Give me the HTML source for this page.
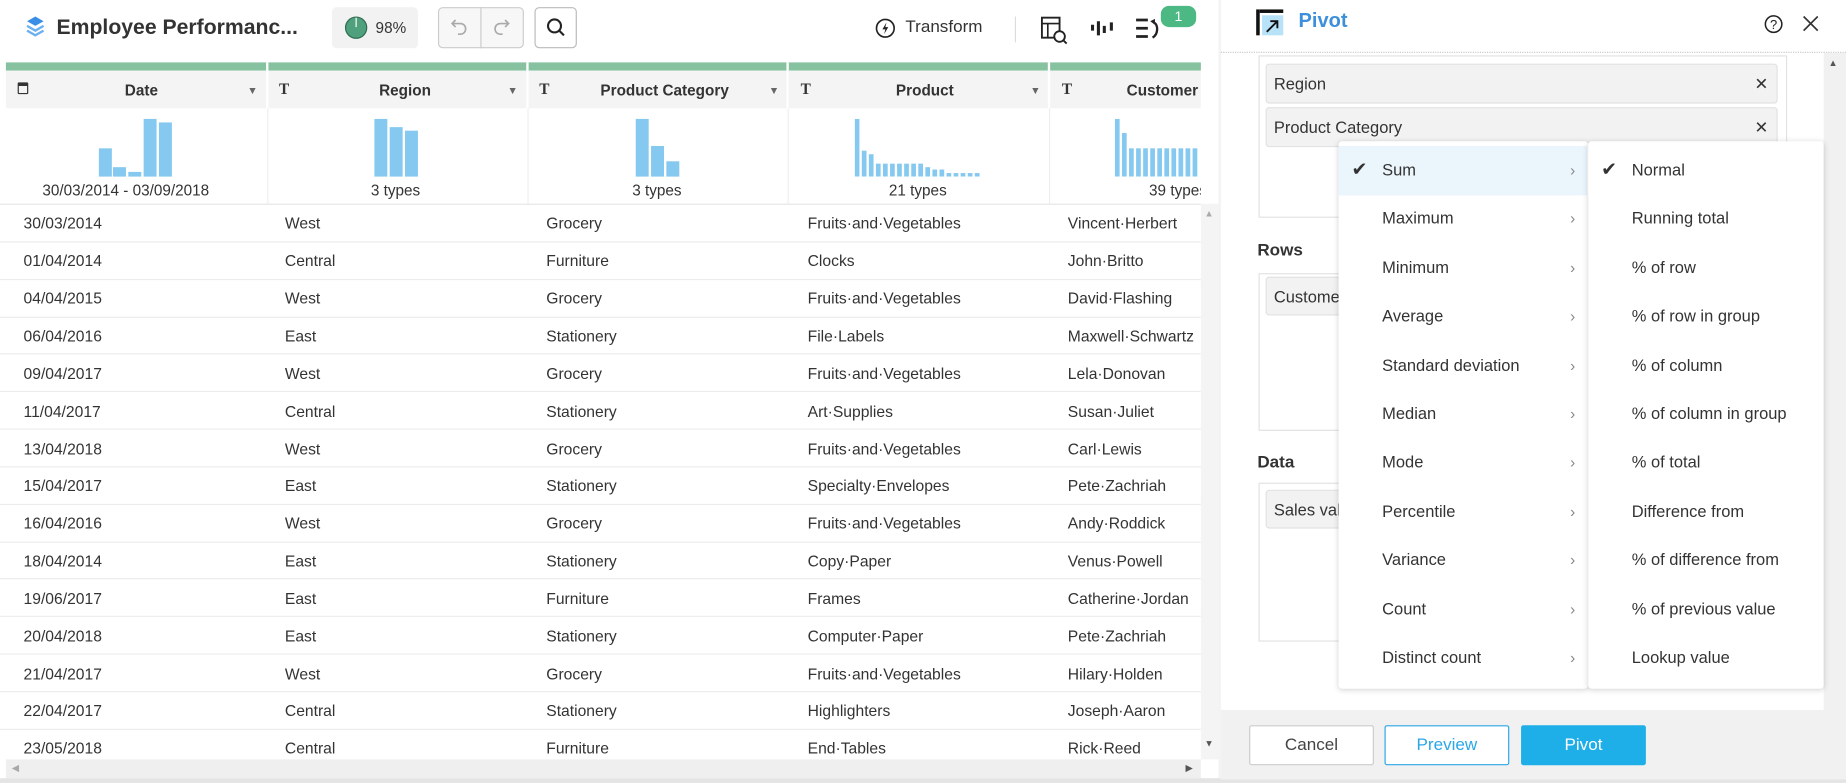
<!DOCTYPE html>
<html><head><meta charset="utf-8"><style>
*{box-sizing:border-box;margin:0;padding:0}
html,body{width:1846px;height:782px;overflow:hidden;background:#fff;font-family:"Liberation Sans",sans-serif;color:#333}
#s{position:absolute;left:0;top:0;width:1568px;height:665px;transform:scale(1.17730);transform-origin:0 0}
.a{position:absolute}
.t{position:absolute;font-size:13.3px;white-space:nowrap;color:#333}
.bar{position:absolute;background:#85c9f0;width:11px}
.hl{position:absolute;left:0;width:1020px;height:1px;background:#ececec}
.mi{position:absolute;left:0;width:211px;height:41.4px;font-size:14px;line-height:41.4px;padding-left:37px;color:#333}
.mi .ch{position:absolute;right:10px;top:0;color:#888;font-size:13px}
.ni{position:absolute;left:0;width:200px;height:41.4px;font-size:14px;line-height:41.4px;padding-left:37px;color:#333}
.chip{position:absolute;background:#f2f2f2;border:1px solid #e2e2e2;border-radius:3px;font-size:14px;padding-left:6px;color:#333}
.btn{position:absolute;top:616px;height:34px;width:106px;font-size:14.5px;text-align:center;line-height:32px;border-radius:2px}
.h{font-weight:bold;font-size:13px;top:69px}
</style></head><body><div id="s">
<svg class="a" style="left:22px;top:13px" width="16" height="20" viewBox="0 0 16 20"><path d="M8 1L15 5L8 9L1 5Z" fill="#3a8ee6"/><path d="M1 9L8 13L15 9M1 13L8 17L15 13" fill="none" stroke="#6cb0f0" stroke-width="2"/></svg>
<div class="t" style="left:48px;top:13px;font-size:18px;font-weight:bold;color:#333">Employee Performanc...</div>
<div class="a" style="left:282px;top:6px;width:73px;height:35px;background:#f2f2f2;border-radius:4px"></div>
<div class="a" style="left:293px;top:14px;width:19px;height:19px;border-radius:50%;background:#4fa07d;border:1px solid #2e6b52"></div>
<div class="a" style="left:302px;top:15px;width:1px;height:8px;background:#fff"></div>
<div class="t" style="left:319px;top:16px;font-size:13px">98%</div>
<div class="a" style="left:372px;top:6px;width:73px;height:35px;border:1px solid #ccc;border-radius:4px;background:#f7f7f7"></div>
<div class="a" style="left:408px;top:6px;width:1px;height:35px;background:#ccc"></div>
<svg class="a" style="left:382px;top:14px" width="16" height="18"><path d="M5 3L2 6L5 9M2 6H9C15 6 15 15 9 15H7" fill="none" stroke="#aaa" stroke-width="1.4"/></svg>
<svg class="a" style="left:418px;top:14px" width="16" height="18"><path d="M11 3L14 6L11 9M14 6H7C1 6 1 15 7 15H9" fill="none" stroke="#aaa" stroke-width="1.4"/></svg>
<div class="a" style="left:454px;top:6px;width:36px;height:35px;border:1px solid #bbb;border-radius:4px"></div>
<svg class="a" style="left:463px;top:14px" width="18" height="18"><circle cx="8" cy="8" r="5.5" fill="none" stroke="#222" stroke-width="1.8"/><path d="M12 12L16 16" stroke="#222" stroke-width="1.8"/></svg>
<svg class="a" style="left:743px;top:15px" width="18" height="18"><circle cx="9" cy="9" r="7.5" fill="none" stroke="#222" stroke-width="1.4"/><path d="M10 4L6.5 10H9L8 14L11.5 8H9Z" fill="#222"/></svg>
<div class="t" style="left:769px;top:15px;font-size:14.5px">Transform</div>
<div class="a" style="left:862px;top:14px;width:1px;height:22px;background:#ddd"></div>
<svg class="a" style="left:884px;top:13px" width="26" height="26"><rect x="1" y="2" width="15" height="17" fill="none" stroke="#222" stroke-width="1.6"/><path d="M1 7H16M6 7V19" stroke="#222" stroke-width="1.4"/><circle cx="16" cy="18" r="4.5" fill="#fff" stroke="#222" stroke-width="1.6"/><path d="M19 21L22 24" stroke="#222" stroke-width="1.6"/></svg>
<svg class="a" style="left:926px;top:16px" width="22" height="16"><path d="M2 5V10M7 2V14M12 6V12M18 3V10" stroke="#222" stroke-width="2.6"/></svg>
<svg class="a" style="left:964px;top:14px" width="24" height="22"><path d="M1 3H11M1 10H11M1 17H11" stroke="#222" stroke-width="2.4"/><path d="M15 18C20 15 20 7 16 5" fill="none" stroke="#222" stroke-width="2"/><path d="M13 4L17 2L17 7Z" fill="#222"/></svg>
<div class="a" style="left:986px;top:5px;width:30px;height:18px;background:#4cb883;border-radius:7px;color:#fff;font-size:12px;text-align:center;line-height:18px">1</div>
<div class="a" style="left:5px;top:53px;width:1015px;height:7px;background:#86c29f"></div>
<div class="a" style="left:5px;top:60px;width:1015px;height:32px;background:#f4f4f4"></div>
<div class="a" style="left:226px;top:53px;width:2px;height:120px;background:#fff"></div>
<div class="a" style="left:447px;top:53px;width:2px;height:120px;background:#fff"></div>
<div class="a" style="left:668px;top:53px;width:2px;height:120px;background:#fff"></div>
<div class="a" style="left:890px;top:53px;width:2px;height:120px;background:#fff"></div>
<div class="a" style="left:227px;top:92px;width:1px;height:81px;background:#eee"></div>
<div class="a" style="left:448px;top:92px;width:1px;height:81px;background:#eee"></div>
<div class="a" style="left:669px;top:92px;width:1px;height:81px;background:#eee"></div>
<div class="a" style="left:891px;top:92px;width:1px;height:81px;background:#eee"></div>
<div class="a" style="left:15px;top:70px;width:9px;height:10px;border:1.5px solid #333;border-top-width:3px;border-radius:1px"></div>
<div class="t h" style="left:106px">Date</div>
<div class="t" style="left:210px;top:72px;font-size:9px;color:#666">▼</div>
<div class="t" style="left:237px;top:68px;font-size:13px;font-weight:bold;font-family:'Liberation Serif',serif">T</div>
<div class="t h" style="left:322px">Region</div>
<div class="t" style="left:431px;top:72px;font-size:9px;color:#666">▼</div>
<div class="t" style="left:458px;top:68px;font-size:13px;font-weight:bold;font-family:'Liberation Serif',serif">T</div>
<div class="t h" style="left:510px">Product Category</div>
<div class="t" style="left:653px;top:72px;font-size:9px;color:#666">▼</div>
<div class="t" style="left:680px;top:68px;font-size:13px;font-weight:bold;font-family:'Liberation Serif',serif">T</div>
<div class="t h" style="left:761px">Product</div>
<div class="t" style="left:875px;top:72px;font-size:9px;color:#666">▼</div>
<div class="t" style="left:902px;top:68px;font-size:13px;font-weight:bold;font-family:'Liberation Serif',serif">T</div>
<div class="a" style="left:957px;top:60px;width:63px;height:32px;overflow:hidden"><div class="t h" style="left:0;top:9px">Customer</div></div>
<div class="bar" style="left:84px;top:126px;height:24px"></div>
<div class="bar" style="left:96px;top:142px;height:8px"></div>
<div class="bar" style="left:109px;top:146px;height:4px"></div>
<div class="bar" style="left:122px;top:101px;height:49px"></div>
<div class="bar" style="left:135px;top:104px;height:46px"></div>
<div class="bar" style="left:318px;top:101px;height:49px"></div>
<div class="bar" style="left:331px;top:108px;height:42px"></div>
<div class="bar" style="left:344px;top:111px;height:39px"></div>
<div class="bar" style="left:540px;top:101px;height:49px"></div>
<div class="bar" style="left:553px;top:124px;height:26px"></div>
<div class="bar" style="left:566px;top:137px;height:13px"></div>
<div class="a" style="left:726px;top:101px;width:110px;height:49px">
<svg width="110" height="49"><g fill="#85c9f0"><rect x="0" y="0" width="4" height="49"/><rect x="6" y="27" width="4" height="22"/><rect x="12" y="30" width="4" height="19"/><rect x="18" y="38" width="4" height="11"/><rect x="24" y="38" width="4" height="11"/><rect x="30" y="38" width="4" height="11"/><rect x="36" y="38" width="4" height="11"/><rect x="42" y="38" width="4" height="11"/><rect x="48" y="38" width="4" height="11"/><rect x="54" y="38" width="4" height="11"/><rect x="60" y="41" width="4" height="8"/><rect x="66" y="43" width="4" height="6"/><rect x="72" y="43" width="4" height="6"/><rect x="78" y="46" width="4" height="3"/><rect x="84" y="46" width="4" height="3"/><rect x="90" y="46" width="4" height="3"/><rect x="96" y="46" width="4" height="3"/><rect x="102" y="46" width="4" height="3"/></g></svg></div>
<div class="a" style="left:947px;top:101px;width:73px;height:49px">
<svg width="73" height="49"><g fill="#85c9f0"><rect x="0" y="0" width="4" height="49"/><rect x="6" y="12" width="4" height="37"/><rect x="12" y="25" width="4" height="24"/><rect x="18" y="25" width="4" height="24"/><rect x="24" y="25" width="4" height="24"/><rect x="30" y="25" width="4" height="24"/><rect x="36" y="25" width="4" height="24"/><rect x="42" y="25" width="4" height="24"/><rect x="48" y="25" width="4" height="24"/><rect x="54" y="25" width="4" height="24"/><rect x="60" y="25" width="4" height="24"/><rect x="66" y="25" width="4" height="24"/></g></svg></div>
<div class="t" style="left:36px;top:154px;font-size:13px">30/03/2014 - 03/09/2018</div>
<div class="t" style="left:315px;top:154px;font-size:13px">3 types</div>
<div class="t" style="left:537px;top:154px;font-size:13px">3 types</div>
<div class="t" style="left:755px;top:154px;font-size:13px">21 types</div>
<div class="a" style="left:976px;top:150px;width:44px;height:22px;overflow:hidden"><div class="t" style="left:0;top:4px;font-size:13px">39 types</div></div>
<div class="hl" style="top:173px;background:#e6e6e6"></div>
<div class="a" style="left:1020px;top:173px;width:15px;height:472px;background:#f4f4f4"></div>
<div class="t" style="left:1023px;top:177px;font-size:8px;color:#aaa">▲</div>
<div class="t" style="left:1023px;top:627px;font-size:8px;color:#555">▼</div>
<div class="a" style="left:1035px;top:0;width:2px;height:665px;background:#f3f3f3"></div>
<div class="a" style="left:5px;top:645px;width:1015px;height:16px;background:#efefef"></div>
<div class="t" style="left:10px;top:648px;font-size:8px;color:#aaa">◀</div>
<div class="t" style="left:1007px;top:648px;font-size:8px;color:#555">▶</div>
<div class="a" style="left:0;top:661px;width:1037px;height:4px;background:#e4e4e4"></div>
<div class="a" style="left:1037px;top:44px;width:531px;height:0;border-top:1px dotted #ccc"></div>
<div class="a" style="left:1067px;top:8px;width:3px;height:22px;background:#111"></div>
<div class="a" style="left:1070px;top:8px;width:20px;height:3px;background:#111"></div>
<div class="a" style="left:1072px;top:13px;width:18px;height:17px;background:#b8e2f8"></div>
<svg class="a" style="left:1074px;top:15px" width="14" height="14"><path d="M2 12L11 3M5 3H11V9" fill="none" stroke="#111" stroke-width="1.6"/></svg>
<div class="t" style="left:1103px;top:8px;font-size:17px;font-weight:bold;color:#3d8fdc">Pivot</div>
<svg class="a" style="left:1498px;top:12px" width="17" height="17"><circle cx="8.5" cy="8.5" r="7" fill="none" stroke="#222" stroke-width="1.3"/><text x="8.5" y="12.5" font-size="11" text-anchor="middle" font-family="Liberation Sans" fill="#222">?</text></svg>
<svg class="a" style="left:1530px;top:12px" width="16" height="16"><path d="M2 2L14 14M14 2L2 14" stroke="#333" stroke-width="1.4"/></svg>
<div class="a" style="left:1549px;top:45px;width:19px;height:558px;background:#f1f1f1"></div>
<div class="t" style="left:1553px;top:49px;font-size:8px;color:#555">▲</div>
<div class="a" style="left:1069px;top:47px;width:449px;height:138px;border:1px solid #e2e2e2"></div>
<div class="chip" style="left:1075px;top:54px;width:435px;height:34px;line-height:33px">Region<span style="position:absolute;right:7px;top:0">✕</span></div>
<div class="chip" style="left:1075px;top:91px;width:435px;height:34px;line-height:33px">Product Category<span style="position:absolute;right:7px;top:0">✕</span></div>
<div class="t" style="left:1068px;top:205px;font-size:14.5px;font-weight:bold">Rows</div>
<div class="a" style="left:1069px;top:232px;width:449px;height:134px;border:1px solid #e2e2e2"></div>
<div class="chip" style="left:1075px;top:235px;width:100px;height:33px;line-height:32px">Customer</div>
<div class="t" style="left:1068px;top:385px;font-size:14.5px;font-weight:bold">Data</div>
<div class="a" style="left:1069px;top:410px;width:449px;height:135px;border:1px solid #e2e2e2"></div>
<div class="chip" style="left:1075px;top:416px;width:100px;height:33px;line-height:32px">Sales value</div>
<div class="a" style="left:1037px;top:603px;width:531px;height:59px;background:#f1f1f1"></div>
<div class="a" style="left:1037px;top:662px;width:531px;height:3px;background:#e4e4e4"></div>
<div class="btn" style="left:1061px;background:#fff;border:1px solid #ccc;color:#444">Cancel</div>
<div class="btn" style="left:1176px;background:#fff;border:1px solid #2aa8e6;color:#2aa8e6">Preview</div>
<div class="btn" style="left:1292px;background:#1eaee8;color:#fff;border:1px solid #1eaee8">Pivot</div>
<div class="a" style="left:1137px;top:120px;width:212px;height:465px;background:#fff;box-shadow:0 1px 5px rgba(0,0,0,.18);border-radius:3px">
<div class="a" style="left:0;top:4px;width:211px;height:42px;background:#ebf5fc"></div>
<div class="mi" style="top:4px"><span style="position:absolute;left:11px;font-size:16px">✔</span>Sum<span class="ch">›</span></div>
<div class="mi" style="top:45.4px">Maximum<span class="ch">›</span></div>
<div class="mi" style="top:86.8px">Minimum<span class="ch">›</span></div>
<div class="mi" style="top:128.2px">Average<span class="ch">›</span></div>
<div class="mi" style="top:169.6px">Standard deviation<span class="ch">›</span></div>
<div class="mi" style="top:211px">Median<span class="ch">›</span></div>
<div class="mi" style="top:252.4px">Mode<span class="ch">›</span></div>
<div class="mi" style="top:293.8px">Percentile<span class="ch">›</span></div>
<div class="mi" style="top:335.2px">Variance<span class="ch">›</span></div>
<div class="mi" style="top:376.6px">Count<span class="ch">›</span></div>
<div class="mi" style="top:418px">Distinct count<span class="ch">›</span></div>
</div>
<div class="a" style="left:1349px;top:120px;width:200px;height:465px;background:#fff;box-shadow:0 1px 5px rgba(0,0,0,.18);border-radius:3px">
<div class="ni" style="top:4px"><span style="position:absolute;left:11px;font-size:16px">✔</span>Normal</div>
<div class="ni" style="top:45.4px">Running total</div>
<div class="ni" style="top:86.8px">% of row</div>
<div class="ni" style="top:128.2px">% of row in group</div>
<div class="ni" style="top:169.6px">% of column</div>
<div class="ni" style="top:211px">% of column in group</div>
<div class="ni" style="top:252.4px">% of total</div>
<div class="ni" style="top:293.8px">Difference from</div>
<div class="ni" style="top:335.2px">% of difference from</div>
<div class="ni" style="top:376.6px">% of previous value</div>
<div class="ni" style="top:418px">Lookup value</div>
</div>
<div class="a" style="left:0;top:173px;width:1020px;height:472px;overflow:hidden;z-index:-1">
<div style="position:absolute;left:0;top:0;width:1020px">
<div class="t" style="left:20px;top:9px">30/03/2014</div><div class="t" style="left:242px;top:9px">West</div><div class="t" style="left:464px;top:9px">Grocery</div><div class="t" style="left:686px;top:9px">Fruits·and·Vegetables</div><div class="t" style="left:907px;top:9px">Vincent·Herbert</div>
<div class="hl" style="top:31.8px"></div>
<div class="t" style="left:20px;top:41px">01/04/2014</div><div class="t" style="left:242px;top:41px">Central</div><div class="t" style="left:464px;top:41px">Furniture</div><div class="t" style="left:686px;top:41px">Clocks</div><div class="t" style="left:907px;top:41px">John·Britto</div>
<div class="hl" style="top:63.7px"></div>
<div class="t" style="left:20px;top:73px">04/04/2015</div><div class="t" style="left:242px;top:73px">West</div><div class="t" style="left:464px;top:73px">Grocery</div><div class="t" style="left:686px;top:73px">Fruits·and·Vegetables</div><div class="t" style="left:907px;top:73px">David·Flashing</div>
<div class="hl" style="top:95.5px"></div>
<div class="t" style="left:20px;top:105px">06/04/2016</div><div class="t" style="left:242px;top:105px">East</div><div class="t" style="left:464px;top:105px">Stationery</div><div class="t" style="left:686px;top:105px">File·Labels</div><div class="t" style="left:907px;top:105px">Maxwell·Schwartz</div>
<div class="hl" style="top:127.4px"></div>
<div class="t" style="left:20px;top:137px">09/04/2017</div><div class="t" style="left:242px;top:137px">West</div><div class="t" style="left:464px;top:137px">Grocery</div><div class="t" style="left:686px;top:137px">Fruits·and·Vegetables</div><div class="t" style="left:907px;top:137px">Lela·Donovan</div>
<div class="hl" style="top:159.2px"></div>
<div class="t" style="left:20px;top:169px">11/04/2017</div><div class="t" style="left:242px;top:169px">Central</div><div class="t" style="left:464px;top:169px">Stationery</div><div class="t" style="left:686px;top:169px">Art·Supplies</div><div class="t" style="left:907px;top:169px">Susan·Juliet</div>
<div class="hl" style="top:191px"></div>
<div class="t" style="left:20px;top:201px">13/04/2018</div><div class="t" style="left:242px;top:201px">West</div><div class="t" style="left:464px;top:201px">Grocery</div><div class="t" style="left:686px;top:201px">Fruits·and·Vegetables</div><div class="t" style="left:907px;top:201px">Carl·Lewis</div>
<div class="hl" style="top:222.9px"></div>
<div class="t" style="left:20px;top:232px">15/04/2017</div><div class="t" style="left:242px;top:232px">East</div><div class="t" style="left:464px;top:232px">Stationery</div><div class="t" style="left:686px;top:232px">Specialty·Envelopes</div><div class="t" style="left:907px;top:232px">Pete·Zachriah</div>
<div class="hl" style="top:254.7px"></div>
<div class="t" style="left:20px;top:264px">16/04/2016</div><div class="t" style="left:242px;top:264px">West</div><div class="t" style="left:464px;top:264px">Grocery</div><div class="t" style="left:686px;top:264px">Fruits·and·Vegetables</div><div class="t" style="left:907px;top:264px">Andy·Roddick</div>
<div class="hl" style="top:286.6px"></div>
<div class="t" style="left:20px;top:296px">18/04/2014</div><div class="t" style="left:242px;top:296px">East</div><div class="t" style="left:464px;top:296px">Stationery</div><div class="t" style="left:686px;top:296px">Copy·Paper</div><div class="t" style="left:907px;top:296px">Venus·Powell</div>
<div class="hl" style="top:318.4px"></div>
<div class="t" style="left:20px;top:328px">19/06/2017</div><div class="t" style="left:242px;top:328px">East</div><div class="t" style="left:464px;top:328px">Furniture</div><div class="t" style="left:686px;top:328px">Frames</div><div class="t" style="left:907px;top:328px">Catherine·Jordan</div>
<div class="hl" style="top:350.2px"></div>
<div class="t" style="left:20px;top:360px">20/04/2018</div><div class="t" style="left:242px;top:360px">East</div><div class="t" style="left:464px;top:360px">Stationery</div><div class="t" style="left:686px;top:360px">Computer·Paper</div><div class="t" style="left:907px;top:360px">Pete·Zachriah</div>
<div class="hl" style="top:382.1px"></div>
<div class="t" style="left:20px;top:392px">21/04/2017</div><div class="t" style="left:242px;top:392px">West</div><div class="t" style="left:464px;top:392px">Grocery</div><div class="t" style="left:686px;top:392px">Fruits·and·Vegetables</div><div class="t" style="left:907px;top:392px">Hilary·Holden</div>
<div class="hl" style="top:413.9px"></div>
<div class="t" style="left:20px;top:423px">22/04/2017</div><div class="t" style="left:242px;top:423px">Central</div><div class="t" style="left:464px;top:423px">Stationery</div><div class="t" style="left:686px;top:423px">Highlighters</div><div class="t" style="left:907px;top:423px">Joseph·Aaron</div>
<div class="hl" style="top:445.8px"></div>
<div class="t" style="left:20px;top:455px">23/05/2018</div><div class="t" style="left:242px;top:455px">Central</div><div class="t" style="left:464px;top:455px">Furniture</div><div class="t" style="left:686px;top:455px">End·Tables</div><div class="t" style="left:907px;top:455px">Rick·Reed</div>
</div></div>
</div></body></html>
